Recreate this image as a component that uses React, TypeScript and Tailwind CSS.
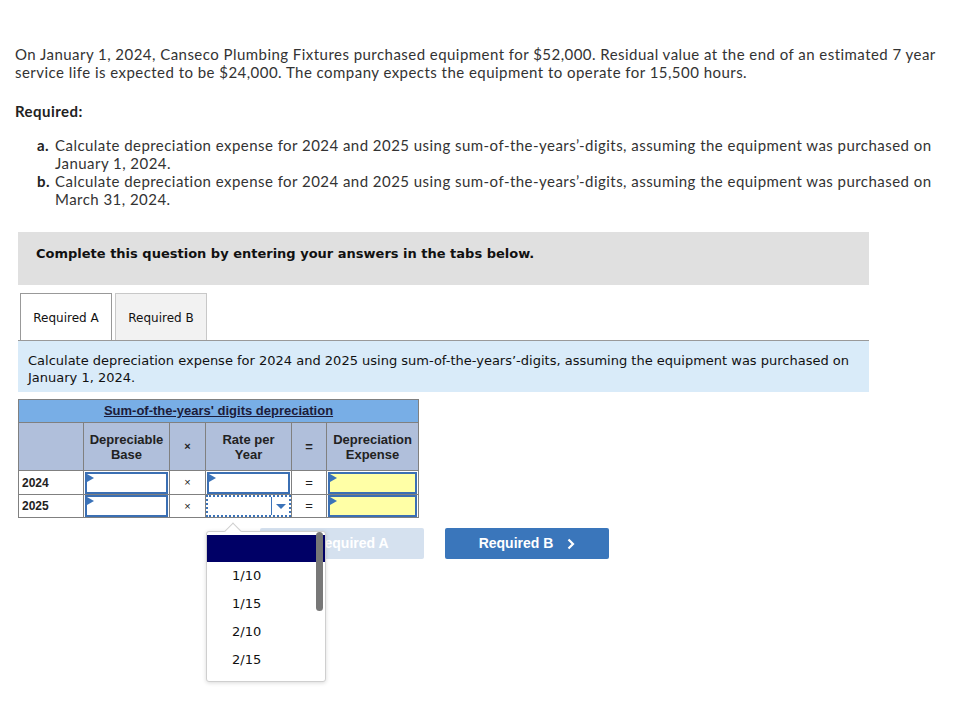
import React from "react";

const proxima = { fontFamily: "Lato, 'Liberation Sans', sans-serif" };

function Tri() {
  return (
    <span className="absolute left-0 top-0 w-0 h-0 border-t-[4px] border-b-[4px] border-l-[7px] border-t-transparent border-b-transparent border-l-[#3b73b9]" />
  );
}

function InputBox({ yellow = false }: { yellow?: boolean }) {
  return (
    <div
      className={`relative h-[22px] mx-[1px] border-2 border-[#3b6fb3] ${yellow ? "bg-[#ffffa6]" : "bg-white"}`}
    >
      <Tri />
    </div>
  );
}

export default function App() {
  const options = ["1/10", "1/15", "2/10", "2/15"];
  return (
    <div className="relative w-[969px] h-[706px] bg-white overflow-hidden text-[#333]">
      <div className="pt-[45px] pl-[15px] text-[15px] leading-[18px] tracking-[0.46px] whitespace-nowrap" style={proxima}>
        <p>
          On January 1, 2024, Canseco Plumbing Fixtures purchased equipment for $52,000. Residual value at the end of an estimated 7 year
          <br />
          service life is expected to be $24,000. The company expects the equipment to operate for 15,500 hours.
        </p>
        <p className="mt-[21px] font-bold text-[#222]">Required:</p>
        <div className="mt-[16px] pl-[22px]">
          <div className="flex">
            <span className="w-[18px] font-bold text-[#222]">a.</span>
            <span>
              Calculate depreciation expense for 2024 and 2025 using sum-of-the-years’-digits, assuming the equipment was purchased on
              <br />
              January 1, 2024.
            </span>
          </div>
          <div className="flex">
            <span className="w-[18px] font-bold text-[#222]">b.</span>
            <span>
              Calculate depreciation expense for 2024 and 2025 using sum-of-the-years’-digits, assuming the equipment was purchased on
              <br />
              March 31, 2024.
            </span>
          </div>
        </div>
      </div>

      <div
        className="mt-[24px] ml-[18px] w-[851px] h-[53px] bg-[#e0e0e0] pt-[14px] pl-[18px] text-[13px] leading-[16px] font-bold text-[#111] whitespace-nowrap"
        style={{ fontFamily: "'DejaVu Sans', Verdana, sans-serif" }}
      >
        Complete this question by entering your answers in the tabs below.
      </div>

      <div className="ml-[18px] w-[851px] mt-[8px]" style={{ fontFamily: "'DejaVu Sans', Verdana, sans-serif" }}>
        <div className="flex pl-[2px] gap-[3px] h-[47px]">
          <div className="w-[92px] h-[47px] pt-[2px] border border-b-0 border-[#999] bg-white flex items-center justify-center text-[12px] text-[#111]">
            Required A
          </div>
          <div className="w-[92px] h-[47px] pt-[2px] border border-b-0 border-[#c8c8c8] bg-[#f2f2f2] flex items-center justify-center text-[12px] text-[#111]">
            Required B
          </div>
        </div>
        <div className="border-t border-[#999] bg-[#d9ebf9] h-[52px] pt-[11px] pl-[10px] text-[13px] leading-[17px] text-[#111] whitespace-nowrap">
          Calculate depreciation expense for 2024 and 2025 using sum-of-the-years’-digits, assuming the equipment was purchased on
          <br />
          January 1, 2024.
        </div>
      </div>

      <div className="ml-[18px] mt-[7px]" style={{ fontFamily: "'Liberation Sans', Arial, sans-serif" }}>
        <table className="table-fixed border-collapse w-[400px] border border-[#808080] text-[#222]">
          <colgroup>
            <col className="w-[65px]" />
            <col className="w-[86px]" />
            <col className="w-[36px]" />
            <col className="w-[86px]" />
            <col className="w-[35px]" />
            <col className="w-[92px]" />
          </colgroup>
          <tbody>
            <tr className="h-[23px] bg-[#78aee6]">
              <td colSpan={6} className="border border-[#808080] text-center text-[13px] font-bold underline p-0 text-[#1c1c3a]">
                Sum-of-the-years' digits depreciation
              </td>
            </tr>
            <tr className="h-[48px] bg-[#b0bfdb] text-[13px] font-bold leading-[15px] text-center">
              <td className="border border-[#808080] p-0"></td>
              <td className="border border-[#808080] p-0">Depreciable<br />Base</td>
              <td className="border border-[#808080] p-0 text-[11px]">×</td>
              <td className="border border-[#808080] p-0">Rate per<br />Year</td>
              <td className="border border-[#808080] p-0">=</td>
              <td className="border border-[#808080] p-0">Depreciation<br />Expense</td>
            </tr>
            <tr className="h-[24px] bg-white">
              <td className="border border-[#808080] p-0 pl-[3px] text-[12px] font-bold">2024</td>
              <td className="border border-[#808080] p-0"><InputBox /></td>
              <td className="border border-[#808080] p-0 text-center text-[11px]">×</td>
              <td className="border border-[#808080] p-0"><InputBox /></td>
              <td className="border border-[#808080] p-0 text-center text-[13px]">=</td>
              <td className="border border-[#808080] p-0"><InputBox yellow /></td>
            </tr>
            <tr className="h-[23px] bg-white">
              <td className="border border-[#808080] p-0 pl-[3px] text-[12px] font-bold">2025</td>
              <td className="border border-[#808080] p-0"><InputBox /></td>
              <td className="border border-[#808080] p-0 text-center text-[11px]">×</td>
              <td className="border border-[#808080] p-0">
                <div className="h-[22px] border-2 border-dotted border-[#3b73b9] bg-white flex">
                  <div className="flex-1"></div>
                  <div className="w-[18px] border-l border-[#3b73b9] flex items-center justify-center">
                    <span className="w-0 h-0 border-l-[5px] border-r-[5px] border-t-[5px] border-l-transparent border-r-transparent border-t-[#3b73b9]" />
                  </div>
                </div>
              </td>
              <td className="border border-[#808080] p-0 text-center text-[13px]">=</td>
              <td className="border border-[#808080] p-0"><InputBox yellow /></td>
            </tr>
          </tbody>
        </table>
      </div>

      <div className="flex ml-[260px] mt-[10px] gap-[21px]" style={{ fontFamily: "'Liberation Sans', Arial, sans-serif" }}>
        <div className="w-[164px] h-[31px] rounded-[2px] bg-[#d5e1ef] text-white font-bold text-[14px] flex items-center justify-center gap-[14px]">
          <span className="text-[15px]">‹</span>
          <span>Required A</span>
        </div>
        <div className="w-[164px] h-[31px] rounded-[2px] bg-[#3a76bb] text-white font-bold text-[14px] flex items-center justify-center gap-[14px]">
          <span>Required B</span>
          <svg width="8" height="12" viewBox="0 0 8 12"><path d="M1.5 1.5 L6 6 L1.5 10.5" stroke="white" strokeWidth="2.2" fill="none" /></svg>
        </div>
      </div>

      <div
        className="absolute left-[206px] top-[531px] z-20 w-[120px] h-[151px] bg-white border border-[#cfcfcf] rounded-[3px] shadow-[0_1px_4px_rgba(0,0,0,0.15)]"
        style={{ fontFamily: "'DejaVu Sans', Verdana, sans-serif" }}
      >
        <span className="absolute left-[20px] -top-[7px] w-[12px] h-[12px] bg-white border-l border-t border-[#cfcfcf] rotate-45" />
        <div className="relative pt-[3px]">
          <div className="w-[118px] h-[27px] bg-[#000066]"></div>
          {options.map((o) => (
            <div key={o} className="h-[28px] pl-[25px] flex items-center text-[13px] text-[#111]">
              {o}
            </div>
          ))}
        </div>
        <span className="absolute left-[109px] top-0 w-[7px] h-[79px] rounded-full bg-[#777]" />
      </div>
    </div>
  );
}
